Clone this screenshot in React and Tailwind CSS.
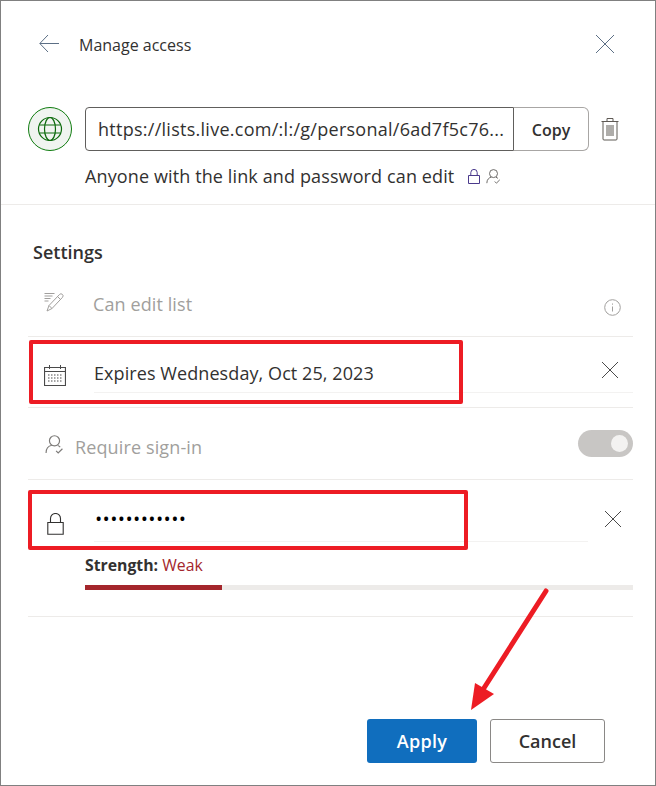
import React from "react";

const font = { fontFamily: '"Open Sans", "Noto Sans", sans-serif' };

function Line({ d, className = "", size = 20, view = 20, color = "currentColor", width = 1 }) {
    return (
        <svg width={size} height={size} viewBox={`0 0 ${view} ${view}`} fill="none" stroke={color} strokeWidth={width} className={className}>
            <path d={d} />
        </svg>
    );
}

function Globe() {
    return (
        <div className="flex h-[44px] w-[44px] shrink-0 items-center justify-center rounded-full border border-[#107c10] bg-[#f0f4f0]">
            <svg width="26" height="26" viewBox="0 0 26 26" fill="none" stroke="#0b6a0b" strokeWidth="1.2">
                <circle cx="13" cy="13" r="11.5" />
                <ellipse cx="13" cy="13" rx="5.5" ry="11.5" />
                <path d="M2.5 9h21M2.5 17h21" />
            </svg>
        </div>
    );
}

function Trash() {
    return (
        <svg width="18" height="24" viewBox="0 0 18 24" fill="none" stroke="#5f5a55" strokeWidth="1">
            <path d="M0.5 4.5h17M6 4.5V1.5h6v3M2 4.5v17.5a1 1 0 0 0 1 1h12a1 1 0 0 0 1-1V4.5" />
            <path d="M6 8v11M8 8v11M10 8v11M12 8v11" />
        </svg>
    );
}

function SmallLock({ size = 12, height = 15 }) {
    return (
        <svg width={size} height={height} viewBox="0 0 12 15" fill="none" stroke="#4b3a8c" strokeWidth="1">
            <path d="M0.5 6.5h11v8h-11zM2.8 6.5V3.6a3.2 3.2 0 0 1 6.4 0v2.9" />
        </svg>
    );
}

function Person({ size = 15, color = "#605e5c" }) {
    return (
        <svg width={size} height={size} viewBox="0 0 18 18" fill="none" stroke={color} strokeWidth="1.1">
            <circle cx="9" cy="5.5" r="4.8" />
            <path d="M1 17c0-4.5 2.8-6.8 5.5-7.3M12 9.900c1 .3 1.800.8 2.400 1.500M10.500 15l2 2 4-4" />
        </svg>
    );
}

function Pencil() {
    return (
        <svg width="20" height="20" viewBox="0 0 20 20" fill="none" stroke="#a19f9d" strokeWidth="1">
            <path d="M0.5 1.5h10M0.5 4h8M0.5 6.5h6M0.5 9h4" />
            <path d="M5 13.5 15.5 2.5a2 2 0 0 1 3 2.8L8 16.5l-5 2.5z" />
            <path d="M13.5 4.5l3 3M5 13.5l3 3" />
        </svg>
    );
}

function Calendar() {
    return (
        <svg width="22" height="21" viewBox="0 0 22 21" fill="none" stroke="#4a4a4a" strokeWidth="1">
            <path d="M0.5 2.5h21v18h-21zM0.5 6.5h21" strokeWidth="1.2" />
            <path d="M5.5 0v4M16.500 0v4" />
            <path d="M4 10h14M4 13h14M4 16h14" strokeDasharray="1.5 1.5" />
        </svg>
    );
}

function Info() {
    return (
        <svg width="17" height="17" viewBox="0 0 17 17" fill="none" stroke="#a19f9d" strokeWidth="1">
            <circle cx="8.500" cy="8.500" r="7.800" />
            <path d="M8.500 7.500v5M8.500 4.500v1.200" />
        </svg>
    );
}

function Lock() {
    return (
        <svg width="17" height="22" viewBox="0 0 17 22" fill="none" stroke="#323130" strokeWidth="1.1">
            <path d="M0.800 9.500h15.400v11.700H0.800zM3.500 9.500V5.500a5 5 0 0 1 10 0v4" />
        </svg>
    );
}

function Divider() {
    return <div className="ml-[27px] mr-[22px] h-px bg-[#edebe9]" />;
}

export default function App() {
    return (
        <div style={font} className="relative box-border flex h-[786px] w-[656px] flex-col overflow-hidden border border-[#808080] bg-white text-[#323130]">
            {/* header */}
            <div className="flex h-[88px] shrink-0 items-center pb-[2px] pl-[38px] pr-[40px]">
                <Line d="M20 9.500H1M9 1 .8 9.500 9 18" size={20} color="#5c6f85" />
                <span className="ml-[20px] mt-[1px] text-[16px] text-[#323130]">Manage access</span>
                <Line d="M1 1l18 18M19 1 1 19" size={20} className="ml-auto" color="#5c6f85" />
            </div>

            {/* link row */}
            <div className="mt-[18px] flex h-[44px] shrink-0 items-center pl-[27px]">
                <Globe />
                <div className="ml-[13px] flex h-[44px] w-[429px] items-center rounded-l-[4px] border border-[#605e5c] pl-[12px] text-[18px] tracking-[0.27px]">
                    <span className="mt-[1px]">https://lists.live.com/:l:/g/personal/6ad7f5c76...</span>
                </div>
                <div className="flex h-[44px] w-[75px] items-center justify-center rounded-r-[6px] border border-l-0 border-[#a8a6a4] text-[16px] font-semibold">
                    <span className="mt-[1px]">Copy</span>
                </div>
                <div className="ml-[12px]"><Trash /></div>
            </div>
            <div className="mt-[12px] flex h-[27px] shrink-0 items-center pl-[84px] text-[18px] tracking-[0.12px] text-[#323130]">
                Anyone with the link and password can edit
                <span className="ml-[14px] flex items-center gap-[6px]">
                    <SmallLock />
                    <Person />
                </span>
            </div>
            <div className="mt-[14px] h-px shrink-0 bg-[#edebe9]" />

            {/* settings */}
            <div className="mt-[33px] h-[28px] pl-[32px] text-[18px] font-semibold leading-[28px]">Settings</div>

            <div className="flex h-[70px] shrink-0 items-center pl-[43px] pr-[34px] text-[18px] tracking-[0.1px] text-[#a19f9d]">
                <div className="mb-[6px] mt-[7px]"><Pencil /></div>
                <span className="ml-[29px] mt-[7px]">Can edit list</span>
                <span className="ml-auto mt-[13px]"><Info /></span>
            </div>
            <Divider />

            <div className="flex h-[55px] shrink-0 items-center pl-[43px] pr-[36px] text-[18px] tracking-[0.08px]">
                <div className="mt-[21px]"><Calendar /></div>
                <div className="ml-[28px] mt-[17px]">Expires Wednesday, Oct 25, 2023</div>
                <Line d="M1 1l16 16M17 1 1 17" size={18} view={18} className="ml-auto mt-[10px]" color="#4a4a4a" />
            </div>
            <div className="ml-[93px] mr-[22px] h-px bg-[#f3f2f1]" />
            <div className="h-[14px] shrink-0" />
            <Divider />

            <div className="flex h-[71px] shrink-0 items-center pl-[44px] pr-[22px] text-[18px] tracking-[0.13px] text-[#a19f9d]">
                <div className="mt-[2px]"><Person size={19} color="#7d7b79" /></div>
                <span className="ml-[11px] mt-[8px]">Require sign-in</span>
                <div className="ml-auto flex h-[27px] w-[55px] items-center justify-end rounded-full bg-[#c8c6c4] pr-[5px]">
                    <div className="h-[17px] w-[17px] rounded-full bg-[#f3f2f1]" />
                </div>
            </div>
            <Divider />

            <div className="flex h-[61px] shrink-0 items-center pl-[46px] pr-[33px]">
                <div className="mt-[26px]"><Lock /></div>
                <div className="ml-[32px] mt-[17px] text-[14px] font-bold leading-none tracking-[2.35px] text-black">••••••••••••</div>
                <Line d="M1 1l16 16M17 1 1 17" size={18} view={18} className="ml-auto mt-[17px]" color="#4a4a4a" />
            </div>
            <div className="ml-[93px] mr-[67px] h-px bg-[#f3f2f1]" />

            <div className="mt-[11px] h-[24px] pl-[84px] text-[15.800px] leading-[24px]">
                <span className="font-bold">Strength:</span> <span className="text-[#a4262c]">Weak</span>
            </div>
            <div className="ml-[84px] mr-[22px] mt-[8px] h-[5px] bg-[#edebe9]">
                <div className="h-[5px] w-[137px] bg-[#a4262c]" />
            </div>
            <div className="h-[26px] shrink-0" />
            <Divider />

            {/* buttons */}
            <div className="mt-[102px] flex h-[44px] shrink-0 pl-[366px]">
                <div className="flex w-[110px] items-center justify-center rounded-[3px] bg-[#106ebe] text-[18px] font-semibold tracking-[0.3px] text-white">Apply</div>
                <div className="ml-[13px] flex w-[115px] items-center justify-center rounded-[3px] border border-[#8a8886] text-[18px] font-semibold">Cancel</div>
            </div>

            {/* annotations drawn on top of the screenshot */}
            <div className="absolute left-[28px] top-[339px] h-[64px] w-[434px] rounded-[2px] border-4 border-[#ed1c24]" />
            <div className="absolute left-[27px] top-[489px] h-[60px] w-[440px] rounded-[2px] border-4 border-[#ed1c24]" />
            <svg className="absolute left-[459px] top-[579px]" width="100" height="140" viewBox="0 0 100 140" fill="none">
                <path d="M86 11 24 108" stroke="#ed1c24" strokeWidth="5" strokeLinecap="round" />
                <path d="M11 130 15 103 34 114z" fill="#ed1c24" />
            </svg>
        </div>
    );
}
